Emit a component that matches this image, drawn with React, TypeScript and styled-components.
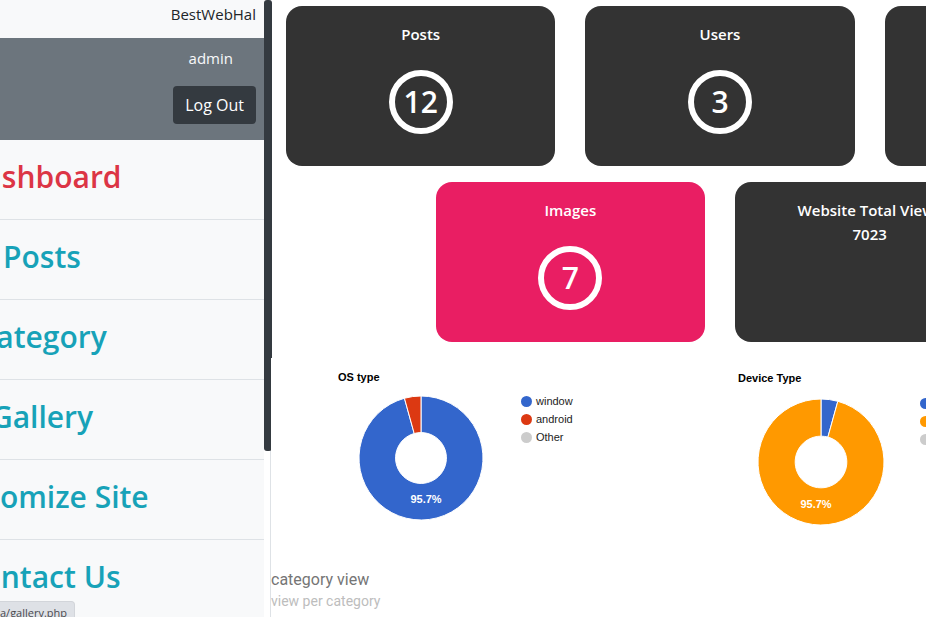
import React from "react";
import styled, { createGlobalStyle } from "styled-components";

const GlobalStyle = createGlobalStyle`
  *, *::before, *::after { box-sizing: border-box; }
  html, body { margin: 0; overflow: hidden; background: #fff; }
  body {
    font-family: "Open Sans", "Noto Sans", sans-serif;
    font-size: 15px;
    line-height: 24px;
    color: #212529;
  }
  h2, h3, p, ul, figure { margin: 0; padding: 0; }
  ul { list-style: none; }
`;

const Page = styled.div`
  display: grid;
  grid-template-columns: 271px minmax(0, 1fr);
  height: 100vh;
  overflow: hidden;
`;

const Sidebar = styled.aside`
  position: relative;
  display: flex;
  min-height: 0;
  padding-right: 6px;
  border-right: 1px solid #dee2e6;
`;

const SidebarView = styled.div`
  flex: 1;
  display: flex;
  justify-content: flex-end;
  align-items: flex-start;
  overflow: hidden;
  background: #f8f9fa;
`;

const SidebarContent = styled.div`
  flex: 0 0 444px;
`;

const ScrollThumb = styled.div`
  position: absolute;
  z-index: 1;
  top: 0;
  left: 264px;
  width: 8px;
  height: 451px;
  border-radius: 3px;
  background: #343a40;
`;

const Brand = styled.div`
  height: 38px;
  padding: 2px 8px;
  text-align: right;
`;

const Account = styled.div`
  display: flex;
  flex-direction: column;
  align-items: flex-end;
  gap: 16px;
  height: 102px;
  padding: 8px;
  background: #6c757d;
`;

const AccountName = styled.a`
  padding: 0 23px;
  color: #f8f9fa;
  text-decoration: none;
`;

const LogOut = styled.button`
  height: 38px;
  padding: 0 12px;
  border: 0;
  border-radius: 4px;
  background: #343a40;
  color: #fff;
  font: inherit;
  font-size: 16px;
`;

const NavItem = styled.li`
  height: 80px;
  padding-top: 16px;
  border-bottom: 1px solid #dee2e6;
  text-align: center;
`;

const NavLink = styled.a<{ $active?: boolean }>`
  font-size: 30px;
  font-weight: 600;
  line-height: 42px;
  color: ${(p) => (p.$active ? "#dc3545" : "#17a2b8")};
  text-decoration: none;
`;

const Main = styled.main`
  overflow: hidden;
`;

const Content = styled.div`
  width: 100%;
  min-width: 898px;
`;

const Cards = styled.section`
  display: flex;
  flex-wrap: wrap;
  justify-content: center;
  gap: 16px 30px;
  padding: 6px 15px 16px;
`;

const Card = styled.article<{ $accent?: boolean }>`
  flex: 0 0 calc((100% - 60px) / 3);
  display: flex;
  flex-direction: column;
  align-items: center;
  height: 160px;
  padding: 16px;
  border-radius: 16px;
  background: ${(p) => (p.$accent ? "#e91e63" : "#333")};
  color: #fff;
  font-size: 15px;
  font-weight: 600;
`;

const CardTitle = styled.h3`
  font-size: 15px;
  font-weight: 600;
  line-height: 24px;
`;

const Count = styled.div`
  display: flex;
  align-items: center;
  justify-content: center;
  width: 64px;
  height: 64px;
  margin-top: 24px;
  border: 6px solid #fff;
  border-radius: 50%;
  font-size: 30px;
`;

const Charts = styled.section`
  position: relative;
  z-index: 2;
  display: flex;
  height: 200px;
  background: #fff;
`;

const Chart = styled.figure<{ $low?: boolean }>`
  flex: 0 0 400px;
  display: grid;
  grid-template-columns: 126px 1fr;
  grid-template-rows: 16px 1fr;
  column-gap: ${(p) => (p.$low ? "36px" : "37px")};
  row-gap: ${(p) => (p.$low ? "13px" : "10px")};
  padding: ${(p) => (p.$low ? "12px 0 0 87px" : "11px 0 0 87px")};
  font-family: "Liberation Sans", sans-serif;
  font-size: 11px;
`;

const ChartTitle = styled.figcaption`
  grid-column: 1 / -1;
  margin-left: -20px;
  font-weight: 700;
  line-height: 16px;
  color: #000;
`;

const Legend = styled.ul<{ $low?: boolean }>`
  display: grid;
  align-content: start;
  margin-top: ${(p) => (p.$low ? "-5px" : "-3px")};
`;

const LegendItem = styled.li<{ $color: string }>`
  display: flex;
  align-items: center;
  gap: 4px;
  height: 18px;
  color: #222;

  &::before {
    content: "";
    width: 11px;
    height: 11px;
    border-radius: 50%;
    background: ${(p) => p.$color};
  }
`;

const Caption = styled.section`
  padding-top: 11px;
  font-family: Roboto, sans-serif;
`;

const CaptionTitle = styled.h2`
  font-size: 16px;
  font-weight: 400;
  line-height: 22px;
  color: #757575;
`;

const CaptionNote = styled.p`
  font-size: 14px;
  line-height: 20px;
  color: #bdbdbd;
`;

const LinkStatus = styled.div`
  position: fixed;
  z-index: 3;
  left: 0;
  bottom: -8px;
  height: 24px;
  padding-right: 7px;
  border: 1px solid #d2d5da;
  border-left: 0;
  border-radius: 0 4px 0 0;
  background: #dee1e6;
  font-size: 11px;
  line-height: 22px;
  color: #4a4a4f;
`;

type Slice = { label: string; share: number; color: string };

const point = (r: number, turn: number) => {
  const a = turn * 2 * Math.PI;
  return `${63 + r * Math.sin(a)} ${63 - r * Math.cos(a)}`;
};

function Donut({ slices, r, labelX, labelY }: { slices: Slice[]; r: number; labelX: number; labelY: number }) {
  const hole = r * 0.41;
  let turn = 0;
  return (
    <svg width="126" height="126" viewBox="0 0 126 126" role="img" aria-label="95.7%">
      {slices
        .filter((s) => s.share > 0)
        .map((s) => {
          const from = turn;
          const to = turn + s.share;
          turn = to;
          const large = s.share > 0.5 ? 1 : 0;
          return (
            <path
              key={s.color}
              d={`M${point(hole, from)} L${point(r, from)} A${r} ${r} 0 ${large} 1 ${point(r, to)} L${point(hole, to)} A${hole} ${hole} 0 ${large} 0 ${point(hole, from)}Z`}
              fill={s.color}
              stroke="#fff"
            />
          );
        })}
      <text x={labelX} y={labelY} textAnchor="middle" fontSize="11" fontWeight="700" fill="#fff">
        95.7%
      </text>
    </svg>
  );
}

const osSlices: Slice[] = [
  { label: "window", share: 0.957, color: "#3366cc" },
  { label: "android", share: 0.043, color: "#dc3912" },
  { label: "Other", share: 0, color: "#cccccc" },
];

const deviceSlices: Slice[] = [
  { label: "", share: 0.043, color: "#3366cc" },
  { label: "", share: 0.957, color: "#ff9900" },
  { label: "", share: 0, color: "#cccccc" },
];

function ChartLegend({ slices, low }: { slices: Slice[]; low?: boolean }) {
  return (
    <Legend $low={low}>
      {slices.map((s) => (
        <LegendItem key={s.color} $color={s.color}>
          {s.label}
        </LegendItem>
      ))}
    </Legend>
  );
}

const links = ["Dashboard", "Posts", "Category", "Gallery", "Customize Site", "Contact Us"];

export default function App() {
  return (
    <>
      <GlobalStyle />
      <Page>
        <Sidebar>
          <SidebarView>
            <SidebarContent>
              <Brand>BestWebHal</Brand>
              <Account>
                <AccountName href="#admin">admin</AccountName>
                <LogOut type="button">Log Out</LogOut>
              </Account>
              <nav>
                <ul>
                  {links.map((name, i) => (
                    <NavItem key={name}>
                      <NavLink href="#" $active={i === 0}>
                        {name}
                      </NavLink>
                    </NavItem>
                  ))}
                </ul>
              </nav>
            </SidebarContent>
          </SidebarView>
          <ScrollThumb />
        </Sidebar>
        <Main>
          <Content>
            <Cards>
              <Card>
                <CardTitle>Posts</CardTitle>
                <Count>12</Count>
              </Card>
              <Card>
                <CardTitle>Users</CardTitle>
                <Count>3</Count>
              </Card>
              <Card />
              <Card $accent>
                <CardTitle>Images</CardTitle>
                <Count>7</Count>
              </Card>
              <Card>
                <CardTitle>Website Total Views</CardTitle>
                <div>7023</div>
              </Card>
            </Cards>
            <Charts>
              <Chart>
                <ChartTitle>OS type</ChartTitle>
                <Donut slices={osSlices} r={62} labelX={68} labelY={108} />
                <ChartLegend slices={osSlices} />
              </Chart>
              <Chart $low>
                <ChartTitle>Device Type</ChartTitle>
                <Donut slices={deviceSlices} r={63} labelX={58} labelY={109} />
                <ChartLegend slices={deviceSlices} low />
              </Chart>
            </Charts>
            <Caption>
              <CaptionTitle>category view</CaptionTitle>
              <CaptionNote>view per category</CaptionNote>
            </Caption>
          </Content>
        </Main>
      </Page>
      <LinkStatus>a/gallery.php</LinkStatus>
    </>
  );
}
